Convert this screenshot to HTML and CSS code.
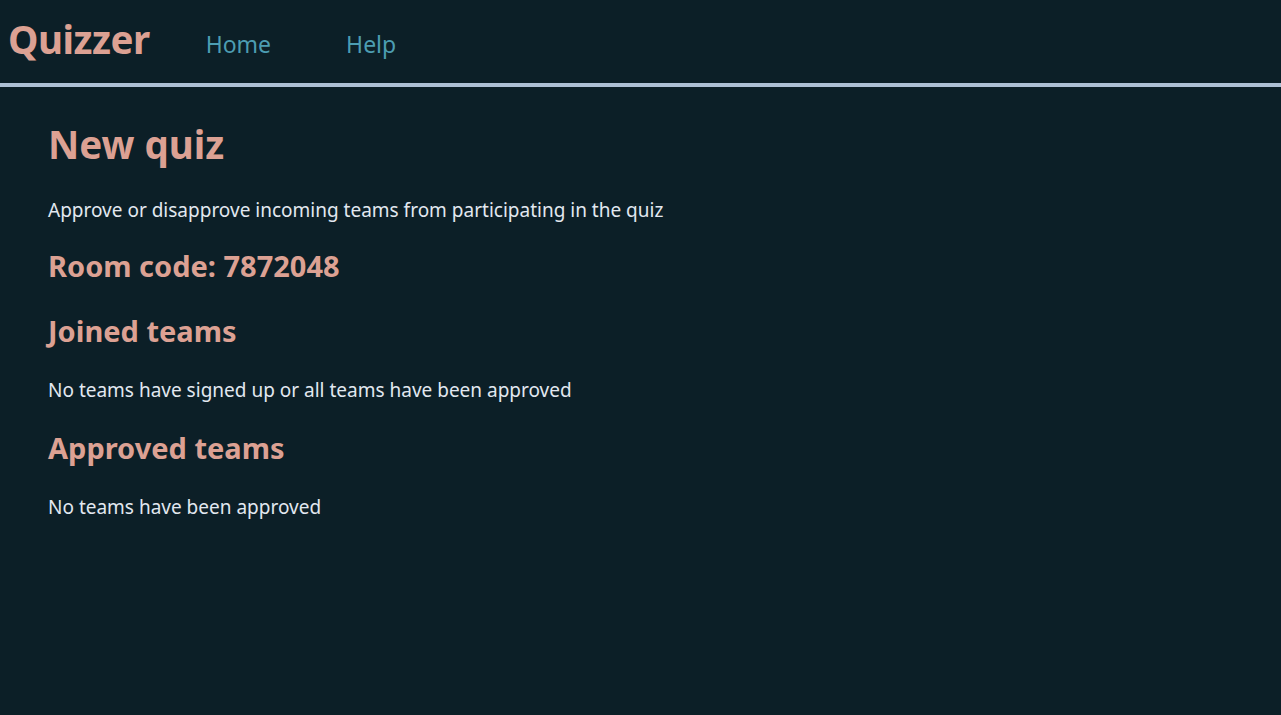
FILE: index.html
```html
<!DOCTYPE html>
<html lang="en">
<head>
<meta charset="utf-8">
<title>Quizzer</title>
<link rel="stylesheet" href="styles.css">
</head>
<body>
<header class="topbar">
  <div class="brand">Quizzer</div>
  <nav class="nav">
    <a class="nav-link" href="#">Home</a>
    <a class="nav-link" href="#">Help</a>
  </nav>
</header>
<main class="content">
  <h1 class="title">New quiz</h1>
  <p class="text first">Approve or disapprove incoming teams from participating in the quiz</p>
  <h2 class="heading code">Room code: 7872048</h2>
  <h2 class="heading joined">Joined teams</h2>
  <p class="text">No teams have signed up or all teams have been approved</p>
  <h2 class="heading approved">Approved teams</h2>
  <p class="text">No teams have been approved</p>
</main>
</body>
</html>
```
FILE: styles.css
```css
html, body {
  margin: 0;
  padding: 0;
}
body {
  background: #0c1f27;
  color: #e2e8f0;
  font-family: "Noto Sans", "Open Sans", sans-serif;
  min-height: 715px;
}
.topbar {
  display: flex;
  align-items: center;
  height: 83px;
  padding-left: 8px;
  border-bottom: 4px solid #adc0d4;
  box-sizing: content-box;
}
.brand {
  color: #dca193;
  font-weight: 700;
  font-size: 38.5px;
  letter-spacing: -0.5px;
  margin-top: -5px;
}
.nav {
  display: flex;
  gap: 75px;
  margin-left: 56px;
  margin-top: 4px;
}
.nav-link {
  color: #4c9db2;
  text-decoration: none;
  font-size: 23px;
}
.content {
  padding: 0 48px;
  display: flex;
  flex-direction: column;
}
.title {
  color: #dca193;
  font-size: 38.5px;
  font-weight: 700;
  margin: 33px 0 0;
  line-height: 48px;
}
.text {
  margin: 28px 0 0;
  font-size: 19px;
  line-height: 26px;
}
.text.first {
  margin-top: 29px;
}
.heading {
  color: #dca193;
  font-size: 29px;
  font-weight: 700;
  margin: 27px 0 0;
  line-height: 36px;
}
.heading.code {
  margin-top: 25px;
}
.heading.joined {
  margin-top: 29px;
}
```
